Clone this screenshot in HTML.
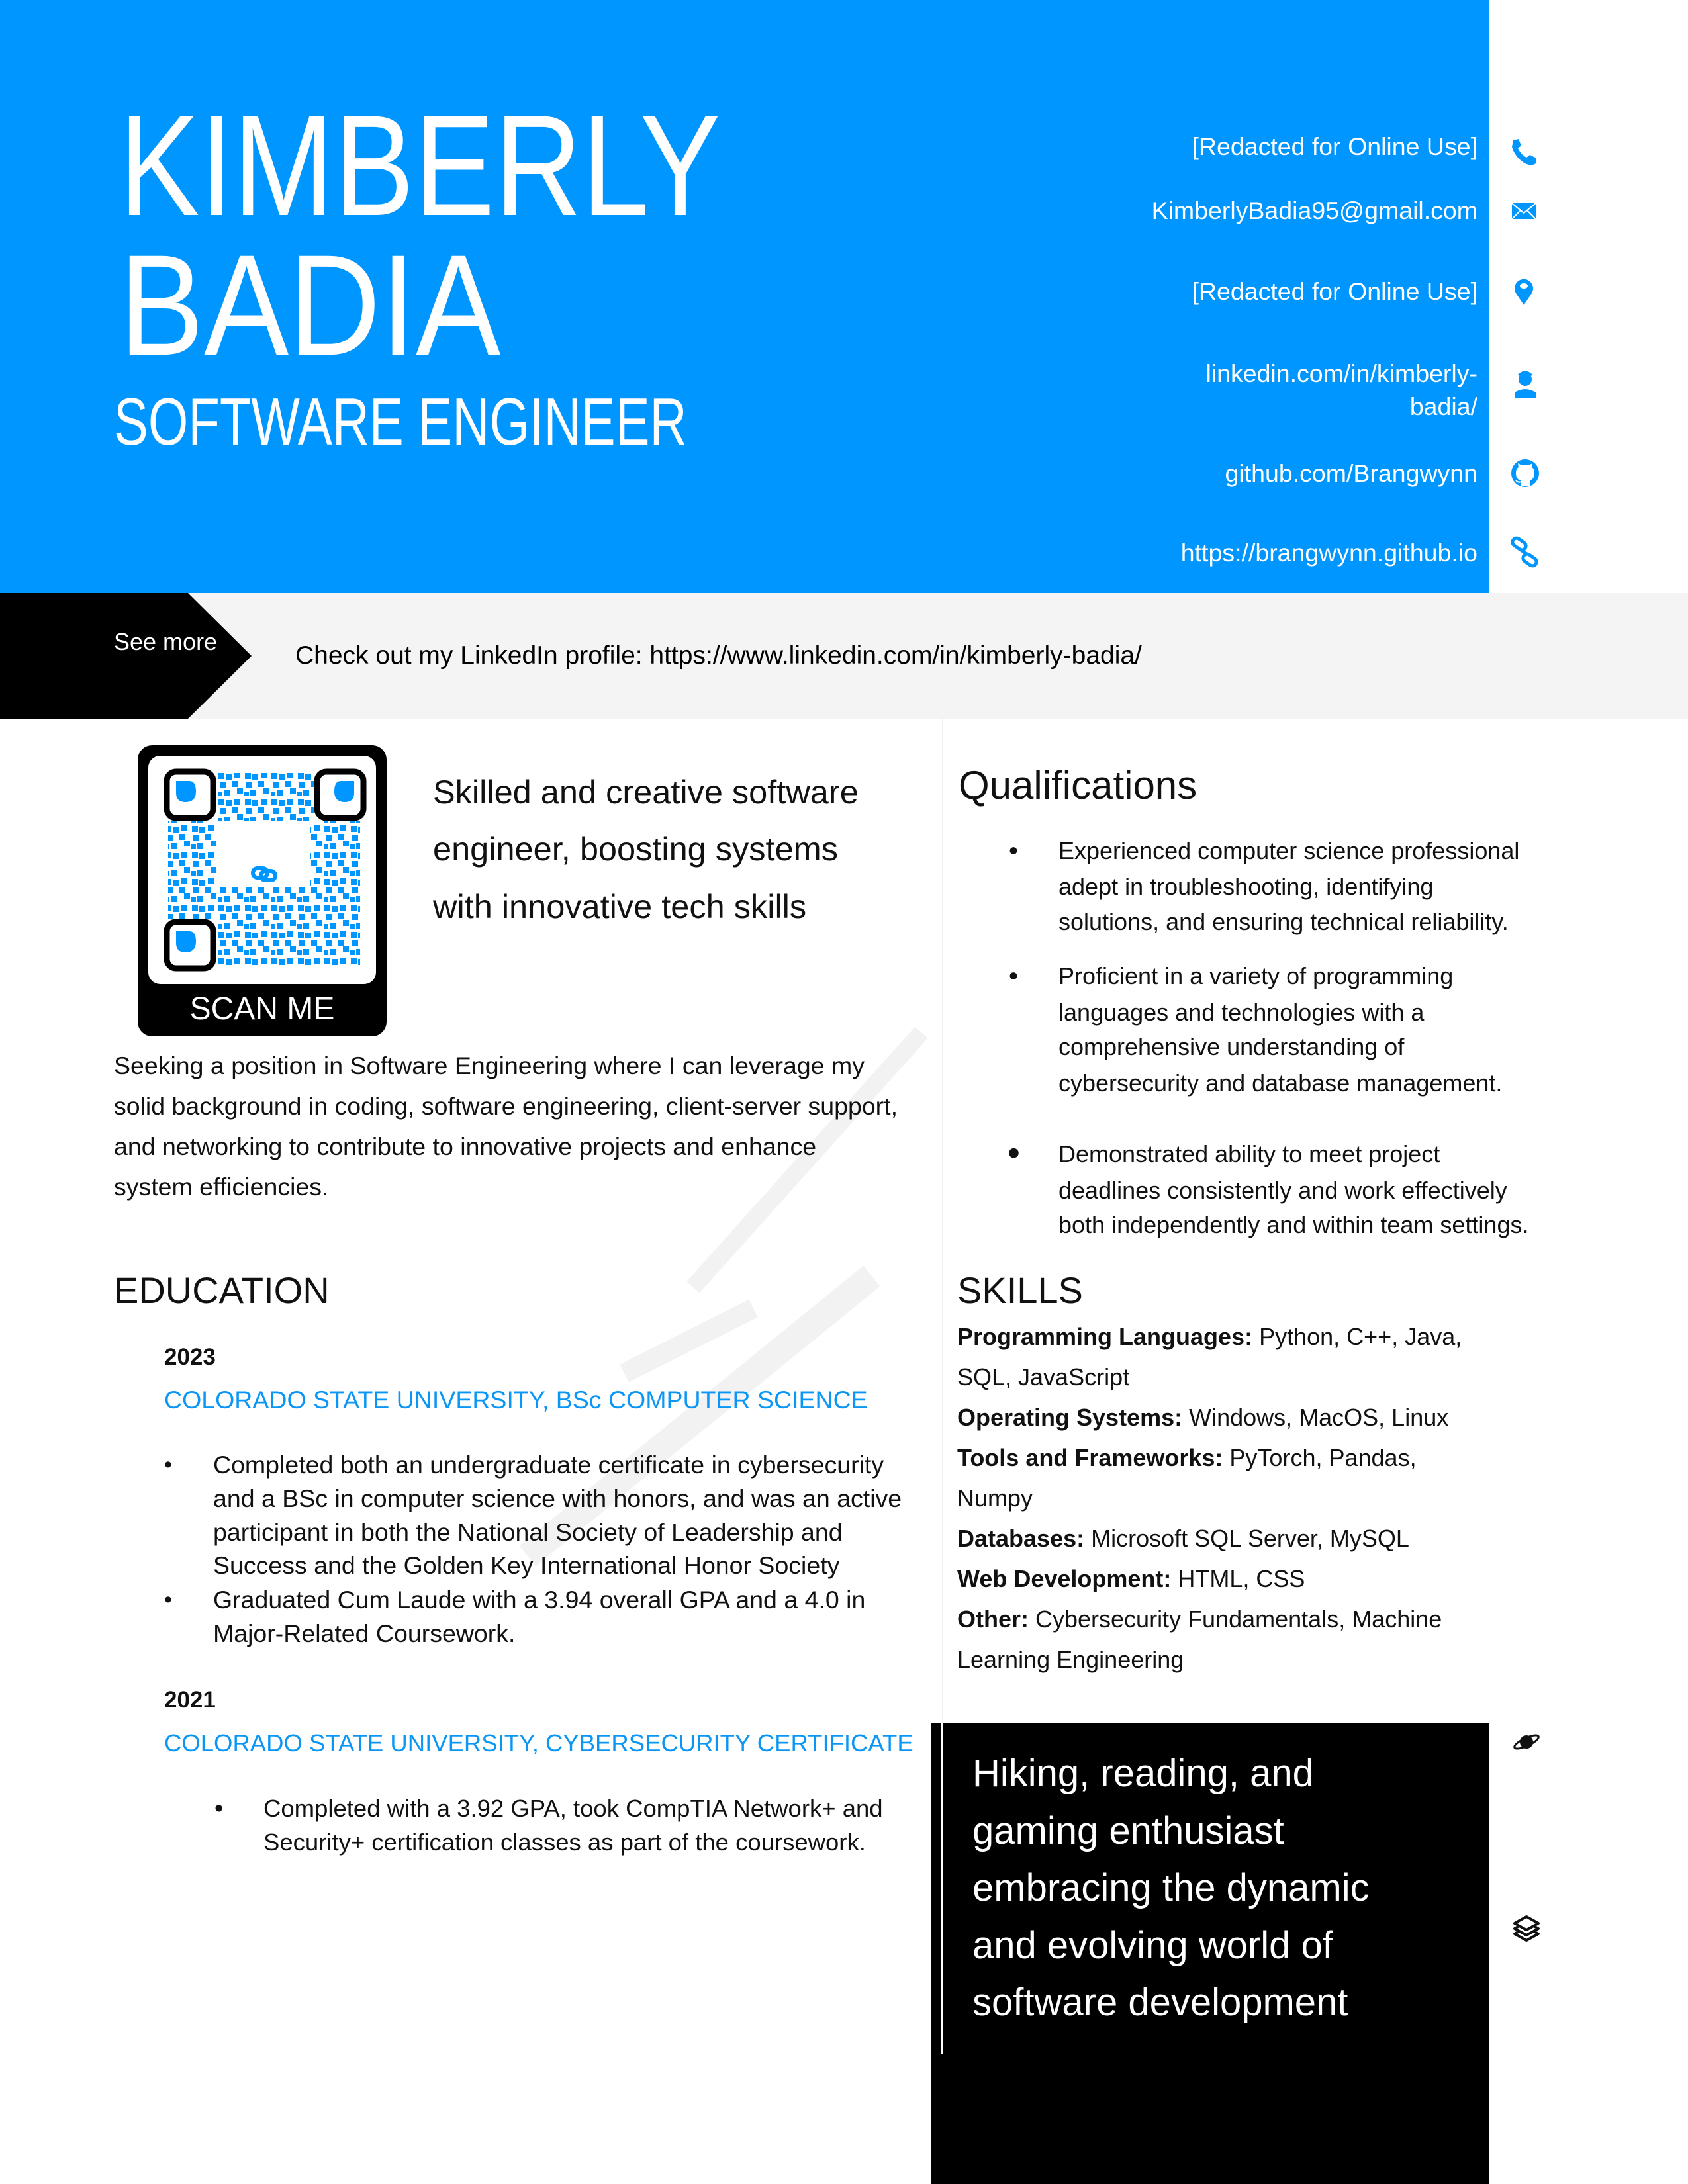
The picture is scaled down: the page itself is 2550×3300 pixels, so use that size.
<!DOCTYPE html>
<html><head><meta charset="utf-8"><style>
*{margin:0;padding:0;box-sizing:border-box}
body{width:2550px;height:3300px;position:relative;background:#fff;font-family:"Liberation Sans",sans-serif;overflow:hidden;color:#111}
.a{position:absolute;white-space:nowrap}
.l{position:absolute;white-space:nowrap;line-height:60px}
.c{position:absolute;white-space:nowrap;line-height:50px;right:318px;text-align:right;color:#fff;font-size:37.5px}
.ic{position:absolute;left:2278px;width:50px;height:50px}
.b{font-weight:bold}
.blue{color:#0a96f5}
</style></head><body>
<div class="a" style="left:0;top:0;width:2249px;height:896px;background:#0096ff"></div>
<div class="a" style="left:0;top:896px;width:2550px;height:190px;background:#f4f4f4"></div>

<div class="a" style="left:180px;top:142px;font-size:217px;line-height:217px;color:#fff;transform:scaleX(0.84);transform-origin:left">KIMBERLY</div>
<div class="a" style="left:180px;top:353px;font-size:217px;line-height:217px;color:#fff;transform:scaleX(0.885);transform-origin:left">BADIA</div>
<div class="a" style="left:172px;top:588px;font-size:101px;line-height:101px;color:#fff;transform:scaleX(0.77);transform-origin:left">SOFTWARE ENGINEER</div>

<div class="c" style="top:196px">[Redacted for Online Use]</div>
<div class="c" style="top:293px">KimberlyBadia95@gmail.com</div>
<div class="c" style="top:415px">[Redacted for Online Use]</div>
<div class="c" style="top:539px">linkedin.com/in/kimberly-</div>
<div class="c" style="top:589px">badia/</div>
<div class="c" style="top:690px">github.com/Brangwynn</div>
<div class="c" style="top:810px">https://brangwynn.github.io</div>

<svg class="ic" style="top:206px" viewBox="0 0 50 50"><path d="M8 6 L16 4 L20 14 L15 18 Q20 28 28 32 L33 28 L43 33 L42 41 Q35 46 24 40 Q10 30 6 16 Z" fill="#0096ff"/></svg>
<svg class="ic" style="top:295px" viewBox="0 0 50 50"><rect x="6" y="12" width="36" height="24" fill="#0096ff"/><path d="M6 12 L24 27 L42 12 M6 36 L19 23 M42 36 L29 23" stroke="#fff" stroke-width="2" fill="none"/></svg>
<svg class="ic" style="top:415px" viewBox="0 0 50 50"><path d="M24 46 L12 28 A14 14 0 1 1 36 28 Z" fill="#0096ff"/><ellipse cx="24" cy="17" rx="6" ry="4" fill="#fff"/></svg>
<svg class="ic" style="top:555px" viewBox="0 0 50 50"><circle cx="26" cy="18" r="10" fill="#0096ff"/><path d="M16 12 Q26 2 36 12" stroke="#0096ff" stroke-width="3" fill="none"/><path d="M10 46 L10 38 Q26 28 42 38 L42 46 Z" fill="#0096ff"/></svg>
<svg class="ic" style="top:690px" viewBox="0 0 50 50"><circle cx="26" cy="25" r="21" fill="#0096ff"/><path d="M19 45 L19 36 Q12 34 12 25 Q12 18 16 16 L15 10 L21 13 Q26 11 31 13 L37 10 L36 16 Q40 18 40 25 Q40 34 33 36 L33 45 Z" fill="#fff"/><path d="M12 36 Q16 40 19 38" stroke="#fff" stroke-width="2" fill="none"/></svg>
<svg class="ic" style="top:810px" viewBox="0 0 50 50"><g stroke="#0096ff" stroke-width="5" fill="none"><rect x="6" y="6" width="22" height="12" rx="6" transform="rotate(35 17 12)"/><rect x="22" y="30" width="22" height="12" rx="6" transform="rotate(35 33 36)"/><line x1="18" y1="20" x2="30" y2="28"/></g></svg>

<svg class="a" style="left:0;top:896px" width="400" height="190"><polygon points="0,0 284,0 380,95 284,190 0,190" fill="#000"/></svg>
<div class="a" style="left:172px;top:945px;font-size:36px;line-height:50px;color:#fff">See more</div>
<div class="a" style="left:446px;top:966px;font-size:39px;line-height:50px;color:#000">Check out my LinkedIn profile: https://www.linkedin.com/in/kimberly-badia/</div>

<div class="a" style="left:1423px;top:1086px;width:2px;height:1517px;background:#f0f0f0"></div>
<svg class="a" style="left:0;top:0" width="2550" height="3300"><g stroke="#f2f2f2" fill="none"><line x1="1392" y1="1560" x2="1047" y2="1945" stroke-width="26"/><line x1="1317" y1="1928" x2="797" y2="2351" stroke-width="40"/><line x1="1138" y1="1977" x2="943" y2="2075" stroke-width="30"/></g></svg>

<svg class="a" style="left:208px;top:1126px" width="376" height="440" viewBox="0 0 376 440">
<defs><pattern id="q" width="40" height="40" patternUnits="userSpaceOnUse"><rect x="2" y="2" width="9" height="9" fill="#0096ff"/><rect x="13" y="3" width="9" height="9" fill="#0096ff"/><rect x="26" y="1" width="9" height="9" fill="#0096ff"/><rect x="4" y="15" width="9" height="9" fill="#0096ff"/><rect x="22" y="14" width="9" height="9" fill="#0096ff"/><rect x="30" y="24" width="9" height="9" fill="#0096ff"/><rect x="10" y="28" width="9" height="9" fill="#0096ff"/><rect x="1" y="30" width="7" height="7" fill="#0096ff"/></pattern></defs>
<rect width="376" height="440" rx="22" fill="#000"/>
<rect x="16" y="16" width="344" height="345" rx="18" fill="#fff"/>
<rect x="46" y="42" width="290" height="292" fill="url(#q)"/>
<rect x="120" y="115" width="140" height="100" fill="#fff"/>
<g><rect x="40" y="36" width="78" height="78" fill="#fff"/><rect x="44" y="40" width="70" height="70" rx="14" fill="none" stroke="#000" stroke-width="9"/><path d="M58 54 H78 Q88 54 88 70 Q88 86 72 86 Q58 86 58 72 Z" fill="#0096ff"/></g>
<g><rect x="267" y="36" width="78" height="78" fill="#fff"/><rect x="271" y="40" width="70" height="70" rx="14" fill="none" stroke="#000" stroke-width="9"/><path d="M327 54 H307 Q297 54 297 70 Q297 86 313 86 Q327 86 327 72 Z" fill="#0096ff"/></g>
<g><rect x="40" y="263" width="78" height="78" fill="#fff"/><rect x="44" y="267" width="70" height="70" rx="14" fill="none" stroke="#000" stroke-width="9"/><path d="M58 281 H78 Q88 281 88 297 Q88 313 72 313 Q58 313 58 299 Z" fill="#0096ff"/></g>
<g stroke="#0096ff" stroke-width="6" fill="none"><rect x="174" y="186" width="22" height="14" rx="7"/><rect x="186" y="190" width="22" height="14" rx="7"/></g>
<text x="188" y="414" font-family="Liberation Sans" font-size="48" fill="#fff" text-anchor="middle">SCAN ME</text>
</svg>

<div class="l" style="left:654px;top:1167px;font-size:50.5px">Skilled and creative software</div>
<div class="l" style="left:654px;top:1253px;font-size:50.5px">engineer, boosting systems</div>
<div class="l" style="left:654px;top:1340px;font-size:50.5px">with innovative tech skills</div>

<div class="l" style="left:172px;top:1580px;font-size:37.5px">Seeking a position in Software Engineering where I can leverage my</div>
<div class="l" style="left:172px;top:1641px;font-size:37.5px">solid background in coding, software engineering, client-server support,</div>
<div class="l" style="left:172px;top:1702px;font-size:37.5px">and networking to contribute to innovative projects and enhance</div>
<div class="l" style="left:172px;top:1763px;font-size:37.5px">system efficiencies.</div>

<div class="l" style="left:172px;top:1918px;font-size:56px;line-height:64px">EDUCATION</div>
<div class="l b" style="left:248px;top:2021px;font-size:35px">2023</div>
<div class="l blue" style="left:248px;top:2085px;font-size:37.5px">COLORADO STATE UNIVERSITY, BSc COMPUTER SCIENCE</div>
<div class="l" style="left:248px;top:2183px;font-size:34px">•</div>
<div class="l" style="left:322px;top:2183px;font-size:37.5px">Completed both an undergraduate certificate in cybersecurity</div>
<div class="l" style="left:322px;top:2234px;font-size:37.5px">and a BSc in computer science with honors, and was an active</div>
<div class="l" style="left:322px;top:2285px;font-size:37.5px">participant in both the National Society of Leadership and</div>
<div class="l" style="left:322px;top:2335px;font-size:37.5px">Success and the Golden Key International Honor Society</div>
<div class="l" style="left:248px;top:2387px;font-size:34px">•</div>
<div class="l" style="left:322px;top:2387px;font-size:37.5px">Graduated Cum Laude with a 3.94 overall GPA and a 4.0 in</div>
<div class="l" style="left:322px;top:2438px;font-size:37.5px">Major-Related Coursework.</div>
<div class="l b" style="left:248px;top:2539px;font-size:35px">2021</div>
<div class="l blue" style="left:248px;top:2604px;font-size:36.5px">COLORADO STATE UNIVERSITY, CYBERSECURITY CERTIFICATE</div>
<div class="l" style="left:324px;top:2703px;font-size:38px">•</div>
<div class="l" style="left:398px;top:2703px;font-size:36.5px">Completed with a 3.92 GPA, took CompTIA Network+ and</div>
<div class="l" style="left:398px;top:2754px;font-size:36.5px">Security+ certification classes as part of the coursework.</div>

<div class="l" style="left:1448px;top:1155px;font-size:60px;line-height:64px">Qualifications</div>
<div class="l" style="left:1524px;top:1256px;font-size:40px">•</div>
<div class="l" style="left:1599px;top:1256px;font-size:36px">Experienced computer science professional</div>
<div class="l" style="left:1599px;top:1310px;font-size:36px">adept in troubleshooting, identifying</div>
<div class="l" style="left:1599px;top:1363px;font-size:36px">solutions, and ensuring technical reliability.</div>
<div class="l" style="left:1524px;top:1445px;font-size:40px">•</div>
<div class="l" style="left:1599px;top:1445px;font-size:36px">Proficient in a variety of programming</div>
<div class="l" style="left:1599px;top:1500px;font-size:36px">languages and technologies with a</div>
<div class="l" style="left:1599px;top:1552px;font-size:36px">comprehensive understanding of</div>
<div class="l" style="left:1599px;top:1607px;font-size:36px">cybersecurity and database management.</div>
<div class="l" style="left:1522px;top:1712px;font-size:54px">•</div>
<div class="l" style="left:1599px;top:1714px;font-size:36px">Demonstrated ability to meet project</div>
<div class="l" style="left:1599px;top:1769px;font-size:36px">deadlines consistently and work effectively</div>
<div class="l" style="left:1599px;top:1821px;font-size:36px">both independently and within team settings.</div>

<div class="l" style="left:1446px;top:1918px;font-size:56px;line-height:64px">SKILLS</div>
<div class="l" style="left:1446px;top:1990px;font-size:36px"><b>Programming Languages:</b> Python, C++, Java,</div>
<div class="l" style="left:1446px;top:2051px;font-size:36px">SQL, JavaScript</div>
<div class="l" style="left:1446px;top:2112px;font-size:36px"><b>Operating Systems:</b> Windows, MacOS, Linux</div>
<div class="l" style="left:1446px;top:2173px;font-size:36px"><b>Tools and Frameworks:</b> PyTorch, Pandas,</div>
<div class="l" style="left:1446px;top:2234px;font-size:36px">Numpy</div>
<div class="l" style="left:1446px;top:2295px;font-size:36px"><b>Databases:</b> Microsoft SQL Server, MySQL</div>
<div class="l" style="left:1446px;top:2356px;font-size:36px"><b>Web Development:</b> HTML, CSS</div>
<div class="l" style="left:1446px;top:2417px;font-size:36px"><b>Other:</b> Cybersecurity Fundamentals, Machine</div>
<div class="l" style="left:1446px;top:2478px;font-size:36px">Learning Engineering</div>

<div class="a" style="left:1406px;top:2603px;width:843px;height:697px;background:#000"></div>
<div class="a" style="left:1422px;top:2603px;width:3px;height:500px;background:#fff"></div>
<div class="l" style="left:1469px;top:2640px;font-size:58px;line-height:80px;color:#fff">Hiking, reading, and</div>
<div class="l" style="left:1469px;top:2727px;font-size:58px;line-height:80px;color:#fff">gaming enthusiast</div>
<div class="l" style="left:1469px;top:2813px;font-size:58px;line-height:80px;color:#fff">embracing the dynamic</div>
<div class="l" style="left:1469px;top:2900px;font-size:58px;line-height:80px;color:#fff">and evolving world of</div>
<div class="l" style="left:1469px;top:2986px;font-size:58px;line-height:80px;color:#fff">software development</div>

<svg class="a" style="left:2284px;top:2612px" width="44" height="40" viewBox="0 0 44 40"><circle cx="22" cy="20" r="10" fill="#111"/><ellipse cx="22" cy="20" rx="20" ry="6" fill="none" stroke="#111" stroke-width="3" transform="rotate(-25 22 20)"/></svg>
<svg class="a" style="left:2284px;top:2890px" width="44" height="48" viewBox="0 0 44 48"><g fill="#fff" stroke="#111" stroke-width="4" stroke-linejoin="round"><path d="M4 32 L22 42 L40 32 L22 22 Z"/><path d="M4 24 L22 34 L40 24 L22 14 Z"/><path d="M4 16 L22 26 L40 16 L22 6 Z"/></g></svg>
</body></html>
